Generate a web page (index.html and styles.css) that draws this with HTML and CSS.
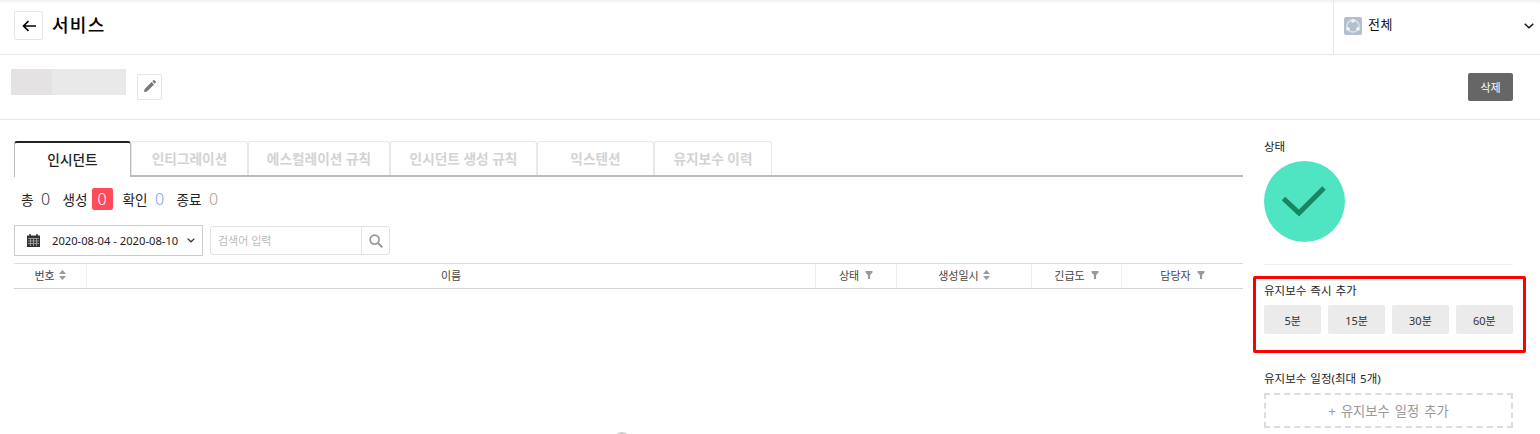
FILE: index.html
```html
<!DOCTYPE html>
<html lang="ko">
<head>
    <meta charset="UTF-8">
    <meta name="viewport" content="width=device-width, initial-scale=1.0">
    <title>서비스</title>
    <link rel="stylesheet" href="styles.css">
</head>
<body>
    <header class="top-bar">
        <div class="top-left">
            <button class="back-btn">
                <svg width="14" height="12" viewBox="0 0 14 12"><path d="M14 6H2M6.5 1.2L1.5 6l5 4.8" fill="none" stroke="#000" stroke-width="1.6"/></svg>
            </button>
            <h1 class="page-title">서비스</h1>
        </div>
        <div class="scope-select">
            <svg class="scope-icon" width="18" height="18" viewBox="0 0 18 18">
                <rect width="18" height="18" rx="2" fill="#b3bfd0"/>
                <circle cx="9" cy="9" r="6" fill="none" stroke="#dfe4ec" stroke-width="1.4"/>
                <circle cx="9" cy="3.8" r="1.9" fill="#eef1f5"/>
                <circle cx="4" cy="11.8" r="1.9" fill="#eef1f5"/>
                <circle cx="14" cy="11.8" r="1.9" fill="#eef1f5"/>
            </svg>
            <span class="scope-name">전체</span>
            <svg class="scope-caret" width="10" height="6" viewBox="0 0 10 6"><path d="M.7.7L5 4.8 9.3.7" fill="none" stroke="#111" stroke-width="1.4"/></svg>
        </div>
    </header>

    <div class="name-bar">
        <div class="name-blur"><span class="name-blur-dark"></span></div>
        <button class="edit-btn">
            <svg width="12" height="12" viewBox="0 0 12 12"><path d="M0 12l.6-3L7.6 2l2.4 2.4-7 7zM8.3 1.3L9.4.2a.7.7 0 0 1 1 0l1.4 1.4a.7.7 0 0 1 0 1l-1.1 1.1z" fill="#777"/></svg>
        </button>
        <button class="delete-btn">삭제</button>
    </div>

    <div class="content">
        <main class="main-col">
            <div class="tabs">
                <div class="tab active">인시던트</div>
                <div class="tab w-integration">인티그레이션</div>
                <div class="tab w-escalation">에스컬레이션 규칙</div>
                <div class="tab w-rule">인시던트 생성 규칙</div>
                <div class="tab w-integration">익스텐션</div>
                <div class="tab w-history">유지보수 이력</div>
            </div>

            <div class="counts">
                <span class="count-label">총</span><span class="count-num c-total">0</span>
                <span class="count-label">생성</span><span class="count-num c-new">0</span>
                <span class="count-label">확인</span><span class="count-num c-ack">0</span>
                <span class="count-label">종료</span><span class="count-num c-done">0</span>
            </div>

            <div class="filters">
                <div class="date-range">
                    <svg width="13" height="13" viewBox="0 0 13 13">
                        <path d="M0 1.5h13V13H0z" fill="#333"/>
                        <path d="M3 0v3M10 0v3" stroke="#333" stroke-width="1.5"/>
                        <path d="M1 4.5h11M1 7h11M1 9.5h11M3.5 4v8M6.5 4v8M9.5 4v8" stroke="#aaa" stroke-width=".8"/>
                    </svg>
                    <span class="date-text">2020-08-04 - 2020-08-10</span>
                    <svg width="8" height="5" viewBox="0 0 8 5"><path d="M.6.6L4 3.8 7.4.6" fill="none" stroke="#333" stroke-width="1.3"/></svg>
                </div>
                <div class="search">
                    <span class="search-text">검색어 입력</span>
                    <span class="search-btn">
                        <svg width="14" height="14" viewBox="0 0 14 14"><circle cx="5.6" cy="5.6" r="4.5" fill="none" stroke="#999" stroke-width="1.7"/><path d="M9 9l4.4 4.4" stroke="#999" stroke-width="2"/></svg>
                    </span>
                </div>
            </div>

            <div class="table-head">
                <div class="th col-no">번호 <svg class="sort" width="7" height="10" viewBox="0 0 7 10"><path d="M3.5 0L7 4H0zM3.5 10L0 6h7z"/></svg></div>
                <div class="th col-name">이름</div>
                <div class="th col-state">상태 <svg class="funnel" width="8" height="8" viewBox="0 0 7 8"><path d="M0 0h7v1.5L4.6 4v4H2.4V4L0 1.5z"/></svg></div>
                <div class="th col-date">생성일시 <svg class="sort" width="7" height="10" viewBox="0 0 7 10"><path d="M3.5 0L7 4H0zM3.5 10L0 6h7z"/></svg></div>
                <div class="th col-level">긴급도 <svg class="funnel" width="8" height="8" viewBox="0 0 7 8"><path d="M0 0h7v1.5L4.6 4v4H2.4V4L0 1.5z"/></svg></div>
                <div class="th col-owner">담당자 <svg class="funnel" width="8" height="8" viewBox="0 0 7 8"><path d="M0 0h7v1.5L4.6 4v4H2.4V4L0 1.5z"/></svg></div>
            </div>
            <div class="table-body"><span class="spinner"></span></div>
        </main>

        <aside class="side-col">
            <div class="side-label">상태</div>
            <div class="status-circle">
                <svg width="44" height="31" viewBox="0 0 44 31"><path d="M1.5 12.5L17 27 42 2" fill="none" stroke="#178661" stroke-width="5"/></svg>
            </div>
            <div class="side-line"></div>

            <section class="quick-add">
                <div class="side-label">유지보수 즉시 추가</div>
                <div class="quick-btns">
                    <button class="quick-btn">5분</button>
                    <button class="quick-btn">15분</button>
                    <button class="quick-btn">30분</button>
                    <button class="quick-btn">60분</button>
                </div>
            </section>

            <div class="side-label schedule-label">유지보수 일정(최대 5개)</div>
            <div class="schedule-add">+ 유지보수 일정 추가</div>
        </aside>
    </div>
</body>
</html>
```

FILE: styles.css
```css
* {
    box-sizing: border-box;
}

html, body {
    height: 434px;
    overflow: hidden;
}

body {
    margin: 0;
    background: #fff;
    color: #222;
    font-family: "Noto Sans", "Noto Sans CJK KR", sans-serif;
    font-size: 11px;
}

button {
    font-family: inherit;
    cursor: pointer;
}

.top-bar {
    height: 55px;
    display: flex;
    justify-content: space-between;
    border-bottom: 1px solid #e8e8e8;
    box-shadow: inset 0 4px 3px -2px #f0f0f0;
}

.top-left {
    display: flex;
    align-items: center;
    padding: 0 0 3px 14px;
}

.back-btn {
    width: 29px;
    height: 29px;
    padding: 0;
    display: flex;
    align-items: center;
    justify-content: center;
    background: #fff;
    border: 1px solid #e6e6e6;
    border-radius: 2px;
}

.page-title {
    margin: 0 0 3px 9px;
    font-size: 18px;
    letter-spacing: 1.3px;
    font-weight: 500;
    color: #000;
}

.scope-select {
    width: 207px;
    display: flex;
    align-items: center;
    padding: 0 6px 3px 10px;
    border-left: 1px solid #e8e8e8;
}

.scope-name {
    margin: 0 0 4px 6px;
    flex: 1;
    font-size: 13px;
    letter-spacing: 0.5px;
    color: #111;
}

.name-bar {
    height: 65px;
    display: flex;
    align-items: flex-start;
    padding: 14px 27px 0 11px;
    border-bottom: 1px solid #e8e8e8;
}

.name-blur {
    width: 115px;
    height: 26px;
    background: #e9e9e9;
}

.name-blur-dark {
    display: block;
    width: 41px;
    height: 26px;
    background: #e4e2e3;
}

.edit-btn {
    width: 25px;
    height: 26px;
    margin: 5px 0 0 11px;
    padding: 0;
    background: #fff;
    border: 1px solid #e6e6e6;
    border-radius: 2px;
}

.delete-btn {
    width: 45px;
    height: 28px;
    margin: 4px 0 0 auto;
    background: #666;
    color: #fff;
    border: none;
    border-radius: 2px;
    font-size: 11px;
    padding: 0;
}

.content {
    display: flex;
    padding: 21px 27px 0 14px;
    gap: 21px;
}

.main-col {
    width: 1229px;
}

.tabs {
    height: 36px;
    display: flex;
    border-bottom: 2px solid #bbb;
}

.tab {
    width: 117px;
    height: 34px;
    display: flex;
    align-items: center;
    justify-content: center;
    padding-bottom: 2px;
    background: #fff;
    border: 1px solid #e8e8e8;
    border-bottom: none;
    border-radius: 3px 3px 0 0;
    color: #d3d3d3;
    font-size: 13.7px;
    font-weight: 700;
}

.tab.active {
    width: 117px;
    height: 36px;
    border: 1px solid #bbb;
    border-top: 2px solid #222;
    border-bottom: none;
    color: #222;
    font-weight: 500;
}

.tab.w-escalation {
    width: 142px;
}

.tab.w-rule {
    width: 147px;
}

.tab.w-history {
    width: 118px;
}

.counts {
    height: 48px;
    display: flex;
    align-items: center;
    padding: 0 0 4px 7px;
    font-size: 13.6px;
    color: #222;
}

.count-label {
    margin-right: 7px;
}

.count-num {
    min-width: 10px;
    margin-right: 12px;
    font-size: 16px;
    font-weight: 300;
    text-align: center;
}

.c-total {
    color: #333;
}

.c-new {
    width: 21px;
    height: 22px;
    margin-left: -3px;
    margin-right: 10px;
    background: #ff4c5b;
    color: #fff;
    border-radius: 2px;
    line-height: 22px;
}

.c-ack {
    color: #7c9ef0;
}

.c-done {
    color: #a8a090;
}

.filters {
    display: flex;
    gap: 7px;
    align-items: flex-start;
}

.date-range {
    width: 189px;
    height: 31px;
    display: flex;
    align-items: center;
    padding: 0 7px 0 12px;
    border: 1px solid #ccc;
    color: #222;
}

.date-text {
    flex: 1;
    margin-left: 12px;
    font-size: 11.2px;
    white-space: nowrap;
}

.search {
    width: 180px;
    height: 29px;
    margin-top: 1px;
    display: flex;
    align-items: center;
    justify-content: space-between;
    border: 1px solid #e2e2e2;
    border-radius: 3px;
}

.search-text {
    margin: 0 0 2px 7px;
    font-size: 11px;
    color: #bbb;
}

.search-btn {
    width: 28px;
    height: 27px;
    display: flex;
    align-items: center;
    justify-content: center;
    border-left: 1px solid #e2e2e2;
}

.table-head {
    height: 26px;
    margin-top: 7px;
    display: flex;
    border-top: 1px solid #ddd;
    border-bottom: 1px solid #d4d4d4;
}

.th {
    display: flex;
    align-items: center;
    justify-content: center;
    gap: 4px;
    padding-bottom: 2px;
    border-right: 1px solid #eee;
    font-size: 11px;
    color: #444;
}

.col-no { width: 73px; }
.col-name { width: 729px; }
.col-state { width: 81px; gap: 6px; }
.col-date { width: 135px; }
.col-level { width: 90px; gap: 6px; }
.col-owner { width: 121px; gap: 6px; border-right: none; }

.sort, .funnel {
    fill: #999;
}

.table-body {
    position: relative;
    height: 160px;
}

.spinner {
    position: absolute;
    left: 600px;
    top: 143px;
    width: 16px;
    height: 16px;
    border: 2px solid transparent;
    border-top-color: #ccc;
    border-radius: 50%;
}

.side-col {
    width: 249px;
}

.side-label {
    height: 16px;
    line-height: 16px;
    margin-top: -2px;
    font-size: 11.5px;
    word-spacing: 1px;
    color: #222;
    white-space: nowrap;
}

.status-circle {
    width: 81px;
    height: 81px;
    margin-top: 6px;
    display: flex;
    align-items: center;
    justify-content: center;
    padding-right: 2px;
    background: #50e5c2;
    border-radius: 50%;
}

.side-line {
    height: 1px;
    margin-top: 22px;
    background: #eee;
}

.quick-add {
    height: 77px;
    margin: 11px -13px 0 -11px;
    padding: 7px 10px 0 8px;
    border: 3px solid #f00;
    border-radius: 2px;
}

.quick-add .side-label {
    margin-top: -3px;
}

.quick-btns {
    display: flex;
    gap: 6.5px;
    margin-top: 6px;
}

.quick-btn {
    flex: 1;
    height: 29px;
    padding: 0;
    background: #ebebeb;
    border: none;
    border-radius: 2px;
    font-size: 11px;
    color: #333;
}

.side-label.schedule-label {
    margin-top: 18px;
}

.schedule-add {
    height: 35px;
    margin-top: 6px;
    display: flex;
    align-items: center;
    justify-content: center;
    border: 2px dashed #ddd;
    color: #999;
    font-size: 13.3px;
    word-spacing: 1.5px;
}
```
